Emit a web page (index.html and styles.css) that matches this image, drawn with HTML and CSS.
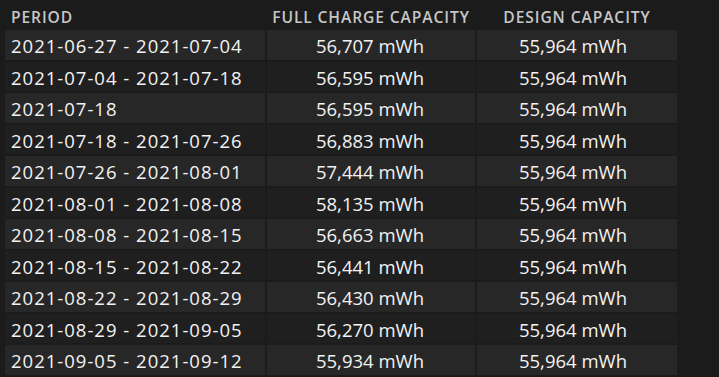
FILE: index.html
```html
<!DOCTYPE html>
<html>
<head>
<meta charset="utf-8">
<link rel="stylesheet" href="styles.css">
</head>
<body>
<div class="report">
  <div class="hd left">PERIOD</div>
  <div class="hd">FULL CHARGE CAPACITY</div>
  <div class="hd">DESIGN CAPACITY</div>

  <div class="c p odd">2021-06-27 - 2021-07-04</div><div class="c n2 odd">56,707 mWh</div><div class="c n3 odd">55,964 mWh</div>
  <div class="c p">2021-07-04 - 2021-07-18</div><div class="c n2">56,595 mWh</div><div class="c n3">55,964 mWh</div>
  <div class="c p odd">2021-07-18</div><div class="c n2 odd">56,595 mWh</div><div class="c n3 odd">55,964 mWh</div>
  <div class="c p">2021-07-18 - 2021-07-26</div><div class="c n2">56,883 mWh</div><div class="c n3">55,964 mWh</div>
  <div class="c p odd">2021-07-26 - 2021-08-01</div><div class="c n2 odd">57,444 mWh</div><div class="c n3 odd">55,964 mWh</div>
  <div class="c p">2021-08-01 - 2021-08-08</div><div class="c n2">58,135 mWh</div><div class="c n3">55,964 mWh</div>
  <div class="c p odd">2021-08-08 - 2021-08-15</div><div class="c n2 odd">56,663 mWh</div><div class="c n3 odd">55,964 mWh</div>
  <div class="c p">2021-08-15 - 2021-08-22</div><div class="c n2">56,441 mWh</div><div class="c n3">55,964 mWh</div>
  <div class="c p odd">2021-08-22 - 2021-08-29</div><div class="c n2 odd">56,430 mWh</div><div class="c n3 odd">55,964 mWh</div>
  <div class="c p">2021-08-29 - 2021-09-05</div><div class="c n2">56,270 mWh</div><div class="c n3">55,964 mWh</div>
  <div class="c p odd">2021-09-05 - 2021-09-12</div><div class="c n2 odd">55,934 mWh</div><div class="c n3 odd">55,964 mWh</div>
</div>
</body>
</html>
```
FILE: styles.css
```css
html, body {
  margin: 0;
  padding: 0;
  background: #1b1b1b;
  height: 100%;
  overflow: hidden;
}
.report {
  display: grid;
  grid-template-columns: 260px 208px 200px;
  grid-template-rows: 28px;
  grid-auto-rows: 29.5px;
  gap: 2px;
  padding-left: 5px;
  font-family: "Open Sans", "Noto Sans", sans-serif;
}
.hd {
  color: #c6c6c6;
  font-size: 15.6px;
  font-weight: 600;
  letter-spacing: 0.9px;
  display: flex;
  align-items: center;
  justify-content: center;
  padding-top: 5px;
}
.hd.left {
  justify-content: flex-start;
  padding-left: 6px;
}
.c {
  background: #1f1f1f;
  color: #f2f2f2;
  font-size: 18.5px;
  display: flex;
  align-items: center;
  white-space: nowrap;
  padding-top: 2px;
  box-sizing: border-box;
}
.c.odd {
  background: #272727;
}
.p {
  padding-left: 6px;
  letter-spacing: 1px;
}
.n2 {
  justify-content: flex-end;
  padding-right: 51px;
}
.n3 {
  justify-content: flex-end;
  padding-right: 50px;
}
```
